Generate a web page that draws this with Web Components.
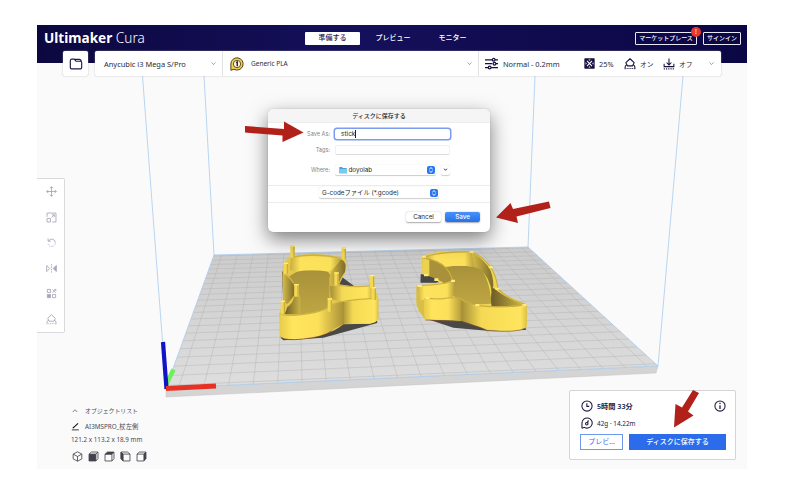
<!DOCTYPE html>
<html lang="ja">
<head>
<meta charset="utf-8">
<title>Ultimaker Cura</title>
<style>
html,body{margin:0;height:100%;background:#fff;overflow:hidden}
body{font-family:"Noto Sans","Noto Sans CJK JP",sans-serif;font-size:8px;color:#35343f}
</style>
</head>
<body>
<cura-app></cura-app>
<script>
const define = (name, html, setup) => customElements.define(name, class extends HTMLElement {
  constructor() {
    super();
    const t = document.createElement('template');
    t.innerHTML = html;
    this.attachShadow({ mode: 'open' }).appendChild(t.content.cloneNode(true));
  }
  connectedCallback() { if (setup) setup(this.shadowRoot, this); }
});

/* ---- icons ---- */
const HOUSE = '<path stroke-linejoin="round" d="M8 1 13.500 6.300 11.500 10.500H4.500L2.500 6.300Z"/><path d="M4.300 9Q1.500 9.500 1.500 12V15M11.700 9Q14.500 9.500 14.500 12V15"/><path stroke-dasharray="1.300 1.200" d="M3.500 14H14"/>';
const ICONS = {
  folder: '<path d="M1.500 4.200Q1.500 2.500 3.200 2.500H6L8 4.800H13Q14.500 4.800 14.500 6.200V12Q14.500 13.500 13 13.500H3Q1.500 13.500 1.500 12ZM6 2.700H12Q13.800 2.700 14.300 5.200"/>',
  down: '<path d="M3.500 5.500 8 10.500 12.500 5.500"/>',
  up: '<path d="M3.500 10 8 5.500 12.500 10"/>',
  sliders: '<path d="M0 3.500H9M12.500 3.500H16M0 8.200H9M13.500 8.200H16M0 13H4M7.500 13H16"/><circle cx="10.700" cy="3.500" r="1.700"/><circle cx="11.700" cy="8.200" r="1.700"/><circle cx="5.700" cy="13" r="1.700"/>',
  infill: '<rect x=".5" y=".5" width="15" height="15" rx="1" fill="currentColor" stroke="none"/><path stroke="#fff" stroke-width="1.500" d="M4.300 4.300 11.700 11.700M11.700 4.300 4.300 11.700"/><path fill="#fff" stroke="none" d="M6.300 2.300H9.700L8 4ZM6.300 13.700H9.700L8 12ZM2.300 6.300V9.700L4 8ZM13.700 6.300V9.700L12 8Z"/>',
  support: HOUSE,
  adhesion: '<path d="M8 .8V9M4.800 6 8 9.200 11.200 6M1.500 7.500V11.500H14.500V7.500"/><path stroke-dasharray="1.500 1.500" d="M1 14.500H15"/>',
  move: '<path d="M8 1V15M1 8H15M5.700 3.300 8 1 10.300 3.300M5.700 12.700 8 15 10.300 12.700M3.300 5.700 1 8 3.300 10.300M12.700 5.700 15 8 12.700 10.300"/>',
  scale: '<path d="M1.500 7V1.500H14.500V14.500H9M1.500 9.500H6.500V14.500H1.500ZM8 8 12 4M8.500 4H12V7.500"/>',
  rotate: '<path d="M3 2V6H7M3.500 6Q6 2.500 9.500 3.200Q13.500 4.200 13.500 8"/><path stroke-dasharray="1.500 1.700" d="M13.500 9Q13 13.500 8 13.800Q4 13.500 3 10"/>',
  mirror: '<path d="M1 3.500V12.500L5.500 8Z"/><path fill="currentColor" d="M15 3.500V12.500L10.500 8Z"/><path stroke-dasharray="2 1.500" d="M8 1.500V14.500"/>',
  permodel: '<path d="M2 2H6.500V6.500H2ZM9.500 9.500H14V14H9.500Z"/><path fill="currentColor" d="M2 9.500H6.500V14H2Z"/><path stroke-width="1.200" d="M9.300 2 14.300 7M14.300 2 9.300 7M11.800 2H14.300V4.500"/>',
  blocker: HOUSE,
  pencil: '<path stroke-width="1.900" d="M3.500 11 12.500 2.500M3.500 11 4.500 9"/><path d="M1.500 14H14"/>',
  clock: '<circle cx="8" cy="8" r="6.800"/><path d="M7.800 4.200V8.500H11"/>',
  info: '<circle cx="8" cy="8" r="6.800"/><path stroke-width="1.700" d="M8 7V12M8 3.800V5.300"/>',
  spool: '<path d="M1.300 15V8A6.800 6.800 0 1 1 4.500 13.800L1.300 15"/><path stroke-width="1.700" d="M8.500 8 9.800 4.500"/><circle cx="7.700" cy="9" r="1.700"/>',
  material: '<path fill="#f5d04f" stroke="#4a3a12" stroke-width="1.100" d="M1 15.200V8A7 7 0 1 1 4.500 14L1 15.200"/><circle cx="8" cy="8" r="4.200" fill="#fff6d8" stroke="#3b3012" stroke-width=".9"/><path stroke="#1a1530" stroke-width="1.500" d="M7 6.500 8.300 5.800V10.500"/>',
  cube: '<path d="M8 1.200 14.300 4.500V11.500L8 14.800 1.700 11.500V4.500ZM1.700 4.500 8 8 14.300 4.500M8 8V14.800"/>',
  front: '<path d="M1.500 4.500 5 1.500H14.500V11L11.500 14.500M11.500 4.500 14.500 1.500"/><path fill="currentColor" d="M1.500 4.500H11.500V14.500H1.500Z"/>',
  top: '<path d="M1.500 4.500V14.500H11.500V4.500M11.500 14.500 14.500 11V1.500"/><path fill="currentColor" d="M1.500 4.800 5 1.500H14.500L11.500 4.800Z"/>',
  left: '<path d="M4.500 4.500H14.500V14.500H4.500L1.500 11V1.500H11L14.500 4.500"/><path fill="currentColor" d="M1.500 1.500 4.500 4.500V14.500L1.500 11Z"/>',
  right: '<path d="M11.500 4.500H1.500V14.500H11.500M1.500 4.500 5 1.500H14.500"/><path fill="currentColor" d="M11.500 4.500 14.500 1.500V11L11.500 14.500Z"/>'
};
define('ui-icon', `<style>:host{display:block;flex:none;width:var(--s,12px);height:var(--s,12px)}svg{display:block;width:100%;height:100%;fill:none;stroke:currentColor;stroke-width:var(--w,1.4)}</style><svg viewBox="0 0 16 16"></svg>`,
  (root, el) => { root.querySelector('svg').innerHTML = ICONS[el.getAttribute('name')]; });

/* ---- header ---- */
define('cura-header', `<style>
:host{display:flex;height:26px;padding:0 6px 12px 7px;background:linear-gradient(90deg,#0c083f,#15105b 45%,#100b4e 70%,#0b0745);color:#fff;align-items:center;justify-content:space-between}
.logo{font:700 13.600px/26px "Noto Sans";width:211px;margin-top:-1px}.logo span{font-weight:300}
nav{display:grid;grid-template-columns:55px 66px 53px;flex:1;margin-left:50px;line-height:12.500px;text-align:center;font-size:7px;font-weight:500}
nav b{background:#fff;color:#1b1752;border-radius:1px;font-weight:500;height:13px}
.right{display:flex;gap:6px;font-size:6px;font-weight:500}
.btn{border:1px solid #e8e7f4;border-radius:1px;height:11px;line-height:10px;position:relative;white-space:nowrap;text-align:center}
.market{width:60px}.sign{width:36px}
i{position:absolute;right:-5px;top:-6px;width:10px;height:10px;border-radius:50%;background:#e5382e;font:7px/10px "Noto Sans";text-align:center}
</style><div class="logo">Ultimaker <span>Cura</span></div>
<nav><b>準備する</b><span>プレビュー</span><span>モニター</span></nav>
<div class="right"><div class="btn market">マーケットプレース<i>!</i></div><div class="btn sign">サインイン</div></div>`);

/* ---- stage bar ---- */
define('stage-bar', `<style>
:host{display:flex;gap:7px;margin:-12px 26px 0 26px;height:25px;position:relative;color:#2c2b3a}
.box{background:#fff;border-radius:2px;box-shadow:0 0 1.500px #aaa;display:flex;align-items:center}
.open{width:25px;justify-content:center;color:#1d1b4a}
.bar{width:626px}
.cell{display:flex;align-items:center;height:100%;box-sizing:border-box}
.cell+.cell{border-left:1px solid #e2e2e6}
.p{width:127px;padding:0 5px 0 9px;justify-content:space-between;font-size:7.450px}
.m{width:256px;padding:0 5px 0 7px;font-size:6.500px}.m span{flex:1;margin-left:7px}
.s{flex:1;padding:0 6px;font-size:7.400px}
.s ui-icon{color:#14113f}.s span{margin-left:5px;white-space:nowrap}.s .jp{font-size:6.800px}
ui-icon.d{--s:7px;--w:1.500;color:#777688!important}
</style><div class="box open"><ui-icon name="folder" style="--s:14px;--w:1.300"></ui-icon></div>
<div class="box bar"><div class="cell p"><span>Anycubic i3 Mega S/Pro</span><ui-icon class="d" name="down"></ui-icon></div>
<div class="cell m"><ui-icon name="material" style="--s:14px"></ui-icon><span>Generic PLA</span><ui-icon class="d" name="down"></ui-icon></div>
<div class="cell s"><ui-icon name="sliders" style="--s:13px;--w:1.500"></ui-icon><span style="width:81px">Normal - 0.2mm</span><ui-icon name="infill" style="--s:11px"></ui-icon><span style="width:25px;margin-left:4px">25%</span><ui-icon name="support"></ui-icon><span class="jp" style="width:23px;margin-left:4px">オン</span><ui-icon name="adhesion"></ui-icon><span class="jp" style="flex:1;margin-left:4px">オフ</span><ui-icon class="d" name="down"></ui-icon></div></div>`);

/* ---- tool column ---- */
define('tool-column', `<style>:host{display:flex;flex-direction:column;justify-content:space-between;align-items:center;box-sizing:border-box;width:28px;height:155px;padding:7px 0 7px 1px;background:#fff;border:1px solid #d9d9dd;border-left:0;border-radius:0 2px 2px 0;color:#a9a8b9;--s:11px;--w:1.300}</style>
${['move','scale','rotate','mirror','permodel','blocker'].map(n => `<ui-icon name="${n}"></ui-icon>`).join('')}`);

/* ---- object list ---- */
define('object-list', `<style>:host{display:grid;grid-template-rows:15.500px 15px 11px 21px;font-size:6.300px;line-height:14px;color:#4a4954;white-space:nowrap}
div{display:flex;align-items:center}.v{gap:5px;padding:1px 0 0 .5px;--s:11px;--w:1.200;color:#43424c}</style>
<div style="font-size:5.900px"><ui-icon name="up" style="--s:8px"></ui-icon><span style="margin-left:6px">オブジェクトリスト</span></div>
<div><ui-icon name="pencil" style="--s:9px;color:#111"></ui-icon><span style="margin-left:5px">AI3MSPRO_杖左側</span></div>
<div>121.2 x 113.2 x 18.9 mm</div>
<div class="v"><ui-icon name="cube"></ui-icon><ui-icon name="front"></ui-icon><ui-icon name="top"></ui-icon><ui-icon name="left"></ui-icon><ui-icon name="right"></ui-icon></div>`);

/* ---- slice result panel ---- */
define('action-panel', `<style>:host{display:grid;grid-template-rows:16px 16px 18px;align-items:center;row-gap:1px;box-sizing:border-box;width:167px;height:70px;padding:7px 11px 9px 10px;background:#fff;border:1px solid #d3d3d8;border-radius:2px;color:#1b193f}
.r{display:flex;align-items:center;gap:4px;padding-left:1px;font-size:7.200px}.r b{flex:1;font-weight:600}.r small{font-size:6.400px}
.b{display:grid;grid-template-columns:43px 97px;gap:6px;align-self:end;font-size:7px;line-height:14px;text-align:center}
.b span{border:1px solid #6d98f0;color:#2f69e8;height:14px}.b span+span{background:#2c6bea;border-color:#2c6bea;color:#fff;font-weight:500}</style>
<div class="r"><ui-icon name="clock"></ui-icon><b>5時間 33分</b><ui-icon name="info"></ui-icon></div>
<div class="r"><ui-icon name="spool"></ui-icon><small>42g · 14.22m</small></div>
<div class="b"><span>プレビ...</span><span>ディスクに保存する</span></div>`);

/* ---- save dialog ---- */
define('combo-knob', `<style>:host{display:block;width:8px;height:8px;border-radius:2px;background:#2878f5;flex:none}svg{display:block;fill:none;stroke:#fff;stroke-width:1}</style><svg width="8" height="8"><path d="M2.300 3.200 4 1.600 5.700 3.200M2.300 4.800 4 6.400 5.700 4.800"/></svg>`);
define('save-dialog', `<style>
:host{display:flex;flex-direction:column;width:222px;height:123px;background:#fff;border-radius:5px;box-shadow:0 0 1px #888,0 7px 19px rgba(0,0,0,.5);font-family:Inter,"Noto Sans CJK JP",sans-serif;font-size:6.300px;color:#27272a}
.t{height:13px;line-height:13px;text-align:center;background:#f5f5f5;border-radius:5px 5px 0 0;border-bottom:1px solid #ececec;font-size:6px;font-weight:500}
.form{display:grid;grid-template-columns:62px 115px;grid-template-rows:12px 12px 12px;column-gap:5px;height:62px;box-sizing:border-box;padding-top:5px;row-gap:4px;align-items:center}
label{text-align:right;color:#858589;font-size:5.600px}
.f{box-sizing:border-box;border:1px solid #f0f0f0;border-bottom-color:#ddd;border-radius:2px;height:10px;display:flex;align-items:center}
.focus{border:0;box-shadow:0 0 0 1.500px #7c9cf0;border-radius:2px;padding-left:6px;height:10px;font-size:6.500px}
.focus::after{content:"";width:1px;height:8px;background:#222}
.pop{border-color:transparent;box-shadow:0 .5px 1px #ccc;padding:0 0 0 2px}
.where{margin-top:7px}.row{display:flex;gap:5px}
.row .pop:first-child{width:102px}.row .pop+.pop{width:9px;padding:0;justify-content:center}
.fmt{height:18px;box-sizing:border-box;border:solid #ececec;border-width:1px 0;display:flex;align-items:flex-start;padding:1px 0 0 51px}
.fmt div{width:120px;justify-content:space-between;height:11px}
.act{flex:1;display:flex;justify-content:flex-end;align-items:center;gap:4px;padding:0 10px 1px 0}
.act span{width:35px;height:10px;line-height:10px;border-radius:2px;text-align:center;box-shadow:0 .3px 1.500px #aaa}
.act span+span{background:linear-gradient(#4a90f7,#2372ef);color:#fff;font-weight:500}
</style><div class="t">ディスクに保存する</div>
<div class="form"><label>Save As:</label><div class="f focus">stick</div>
<label>Tags:</label><div class="f"></div>
<label class="where">Where:</label><div class="row where"><div class="f pop"><svg width="8" height="8" style="margin:0 1.500px 0 1px"><path d="M.3 1H3L4 2H7.700V7.300H.3Z" fill="#4ba3d9"/><path d="M.3 3H7.700V7.300H.3Z" fill="#79c9f2"/></svg><span style="flex:1">doyolab</span><combo-knob></combo-knob></div><div class="f pop"><ui-icon name="down" style="--s:5px;--w:3"></ui-icon></div></div></div>
<div class="fmt"><div class="f pop"><span>G-codeファイル (*.gcode)</span><combo-knob></combo-knob></div></div>
<div class="act"><span>Cancel</span><span>Save</span></div>`);

/* ---- 3D build volume ---- */
define('build-scene', `<style>:host{display:block}svg{display:block;width:100%;height:100%}</style>
<svg viewBox="37 25 710 444">
<defs>
<linearGradient id="bed" x1="0" y1="0" x2="0" y2="1"><stop offset="0" stop-color="#cbcbcb"/><stop offset="1" stop-color="#dedede"/></linearGradient>
<linearGradient id="y"><stop offset="0" stop-color="#e6ca4a"/><stop offset=".2" stop-color="#ffe45d"/><stop offset=".6" stop-color="#fde05a"/><stop offset="1" stop-color="#a88f35"/></linearGradient>
<linearGradient id="y2"><stop offset="0" stop-color="#a38e36"/><stop offset=".3" stop-color="#f5d954"/><stop offset=".9" stop-color="#ffe55e"/><stop offset="1" stop-color="#dcc048"/></linearGradient>
<linearGradient id="y3"><stop offset="0" stop-color="#c9ae40"/><stop offset=".2" stop-color="#fde25b"/><stop offset=".8" stop-color="#fbe05a"/><stop offset="1" stop-color="#b59c3b"/></linearGradient>
<linearGradient id="dk"><stop offset="0" stop-color="#d8bd47"/><stop offset="1" stop-color="#7d6b2a"/></linearGradient>
<linearGradient id="dk2"><stop offset="0" stop-color="#6b5c26"/><stop offset="1" stop-color="#cdb244"/></linearGradient>
<linearGradient id="fl" x1="0" y1="0" x2="0" y2="1"><stop offset="0" stop-color="#a8913a"/><stop offset="1" stop-color="#bfa643"/></linearGradient>
</defs>
<path d="M166 388V397L656 373 658 366Z" fill="#d4d4d4" stroke="#c4c4c4" stroke-width=".5"/>
<path d="M214 255 528 247 658 366 166 388Z" fill="url(#bed)"/>
<path id="grid" fill="none" stroke="#aeaeb0" stroke-width=".4"/>
<path d="M204 76 214 255 528 247 535 76M142.500 76 166 388M683 76 658 366M214 255 166 388 658 366 528 247" fill="none" stroke="#a9cbee" stroke-width=".8"/>
<g transform="translate(260 235) scale(.33333)">
 <path d="M245 125 282 153 230 153ZM62 308 70 316 190 308 352 264 350 245 200 270Z" fill="#494846"/>
 <path d="M66 108 98 150 70 204Z" fill="#514b37"/>
 <path d="M68 100Q72 72 96 64Q165 48 250 68Q264 78 258 108L238 148 290 156Q340 150 349 170L355 190V250Q352 263 330 266L250 268Q210 303 120 313Q66 315 60 304L58 235 70 205 92 180 68 142Z" fill="#e3c84b"/>
 <path d="M88 124 118 106H200L218 130 212 228 170 238 118 240V180L92 150Z" fill="url(#fl)"/>
 <path d="M92 70Q165 54 243 73L207 110Q150 102 110 110L90 105Z" fill="url(#y3)"/>
 <path d="M243 73Q262 80 255 111Q238 132 236 151L224 195 208 190V130Q209 112 243 73Z" fill="url(#dk)"/>
 <path d="M68 116Q80 116 99 145Q106 165 102 182L82 207 69 200Z" fill="url(#dk)"/>
 <path d="M74 238 82 216Q98 207 103 183L121 184V238Z" fill="url(#dk2)"/>
 <path d="M210 153Q224 147 240 151Q290 158 333 154V191L260 199Q225 202 212 185Z" fill="url(#y2)"/>
 <path d="M246 205Q256 196 350 190L355 191V250Q350 265 327 266H246Z" fill="url(#y2)"/>
 <path d="M58 235Q75 243 110 240Q190 233 216 210Q236 196 252 200V267Q225 278 204 293Q170 312 90 313Q65 313 60 302Z" fill="url(#y)"/>
 <path d="M59 235Q75 243 110 240Q190 233 216 210Q236 195 348 190M93 67Q165 52 246 70M212 153Q224 147 240 151Q290 158 333 152M70 116Q85 120 101 145" fill="none" stroke="#cdb345" stroke-width="4"/>
 <path d="M62 307Q80 318 130 312Q190 306 215 288" fill="none" stroke="#7a3d22" stroke-width="2"/>
 <g id="pegs"></g>
</g>
<g transform="translate(400 235) scale(.33333)">
 <path d="M63 118 62 142 118 142 95 120ZM70 248 160 278 262 287 378 285 370 262 190 240Z" fill="#494846"/>
 <path d="M65 66Q100 45 210 48Q250 60 275 97Q292 130 294 161Q320 187 374 205L382 214 379 278Q350 291 262 286L240 277 187 257 76 254 55 226 50 210V153L118 144 106 128 65 116Z" fill="#f0d550"/>
 <path d="M134 96Q190 87 240 98Q268 130 275 206L200 210 160 183 150 130Z" fill="url(#fl)"/>
 <path d="M74 65Q120 52 216 53L224 96Q180 89 136 95L110 80Z" fill="url(#y3)"/>
 <path d="M216 53Q244 67 268 98Q280 123 280 152Q270 185 277 207Q278 145 253 116 238 99 223 97Z" fill="url(#dk)"/>
 <path d="M282 160Q308 184 366 208L358 215H275Q271 195 276 160Z" fill="url(#dk2)"/>
 <path d="M67 68Q115 75 137 98Q154 117 155 137L132 145Q118 134 94 126L67 116Z" fill="#a8913a"/>
 <path d="M67 68 88 75V123L66 116Z" fill="#ecd24e"/>
 <path d="M62 118 90 126 112 143H62Z" fill="#494846"/>
 <path d="M50 152Q140 149 164 138V178L155 189H78L67 204 58 194 55 210 50 203Z" fill="url(#y3)"/>
 <path d="M50 160 62 197 75 192V252L58 230 50 210Z" fill="#d8be48"/>
 <path d="M72 188Q120 195 166 187Q184 191 192 201V260Q178 254 76 253Q70 250 72 188Z" fill="url(#y)"/>
 <path d="M184 198Q223 221 303 218Q350 216 381 211V270Q378 287 330 289Q260 286 224 271L184 257Z" fill="url(#y2)"/>
 <path d="M67 68Q120 48 216 51Q250 66 274 98Q291 130 294 162Q320 190 376 209Q300 220 232 212Q196 202 180 190Q150 186 130 191 100 194 78 188M67 68Q115 75 137 98Q154 117 157 137Q142 149 52 152" fill="none" stroke="#c9af42" stroke-width="3.500"/>
 <path d="M77 185h12v7H77zM367 207h12v7h-12zM226 207h12v7h-12zM52 149h14v7H52zM153 134h12v7h-12zM266 94h12v6h-12zM286 158h12v6h-12zM66 62h12v6H66zM209 48h12v6h-12zM72 117h13v7H72zM103 130h12v8h-12z" fill="#ffeb79"/>
 <path d="M76 255 187 260 243 278 262 287Q350 294 378 279" fill="none" stroke="#81522b" stroke-width="2"/>
</g>
<path d="M166 385 173.500 369.500" stroke="#6df05c" stroke-width="4.500"/>
<path d="M163 342 166.500 389" stroke="#1013c8" stroke-width="4.200"/>
<path d="M166 388.500 216 386" stroke="#e63224" stroke-width="5"/>
</svg>`, root => {
  // Map the unit square (origin front-left) onto the projected plate.
  const [x0, y0, x1, y1, x2, y2, x3, y3] = [166, 388, 658, 366, 528, 247, 214, 255];
  const dx1 = x1 - x2, dx2 = x3 - x2, sx = x0 - x1 + x2 - x3, dy1 = y1 - y2, dy2 = y3 - y2, sy = y0 - y1 + y2 - y3;
  const den = dx1 * dy2 - dx2 * dy1, g = (sx * dy2 - dx2 * sy) / den, h = (dx1 * sy - sx * dy1) / den;
  const P = (u, v) => {
    const w = g * u + h * v + 1;
    return (((x1 - x0 + g * x1) * u + (x3 - x0 + h * x3) * v + x0) / w).toFixed(2) + ' ' +
           (((y1 - y0 + g * y1) * u + (y3 - y0 + h * y3) * v + y0) / w).toFixed(2);
  };
  let d = '';
  for (let i = 0; i < 21; i++) { const u = (i + .5) / 21; d += `M${P(u, 0)}L${P(u, 1)}`; }
  for (let i = 0; i < 21; i++) { const v = (i + .25) / 20.5; d += `M${P(0, v)}L${P(1, v)}`; }
  root.getElementById('grid').setAttribute('d', d);
  root.getElementById('pegs').innerHTML = [[97,32,68],[251,38,73],[77,83,118],[229,112,152],[109,147,185],[68,197,238],[209,190,230],[336,120,158],[341,156,195]]
    .map(([x, a, b]) => `<path d="M${x-6} ${a}H${x+7}V${b}H${x-6}Z" fill="#f4d851"/><path d="M${x+3} ${a+3}H${x+7}V${b}H${x+3}Z" fill="#c9af40"/><path d="M${x-6} ${a}H${x+7}V${a+4}H${x-6}Z" fill="#ffee7c"/>`).join('');
});

/* ---- pointer arrows ---- */
define('pointer-arrows', `<style>:host{display:block}svg{display:block;width:100%;height:100%}</style>
<svg viewBox="37 25 710 444" fill="#b2201a"><path d="M245 126 284 129V121.500L303.500 132.500 282.500 142V135.500L245 132.500Z"/><path d="M549 201.500 513 209 510.500 203 496 217.500 518 223 516.500 216.500 550.500 208Z"/><path d="M693 390 682 407.500 675.500 404 674 427.500 693.500 415.500 688 411.500 699 393Z"/></svg>`);

/* ---- app window ---- */
define('cura-app', `<style>
:host{display:block;padding:25px 0 0 37px}
.win{position:relative;width:710px;height:444px;background:#fafafa;display:flex;flex-direction:column;overflow:hidden}
build-scene,pointer-arrows{position:absolute;inset:0}
cura-header,stage-bar,main{position:relative}
main{flex:1;display:flex;flex-direction:column;justify-content:space-between;padding:102px 11px 9px 0}
.foot{display:flex;justify-content:space-between;align-items:flex-end;padding-left:34px}
object-list{margin-bottom:-6px}
save-dialog{position:absolute;left:231px;top:84px}
</style><div class="win"><build-scene></build-scene><cura-header></cura-header><stage-bar></stage-bar>
<main><tool-column></tool-column><div class="foot"><object-list></object-list><action-panel></action-panel></div></main>
<save-dialog></save-dialog><pointer-arrows></pointer-arrows></div>`);
</script>
</body>
</html>
